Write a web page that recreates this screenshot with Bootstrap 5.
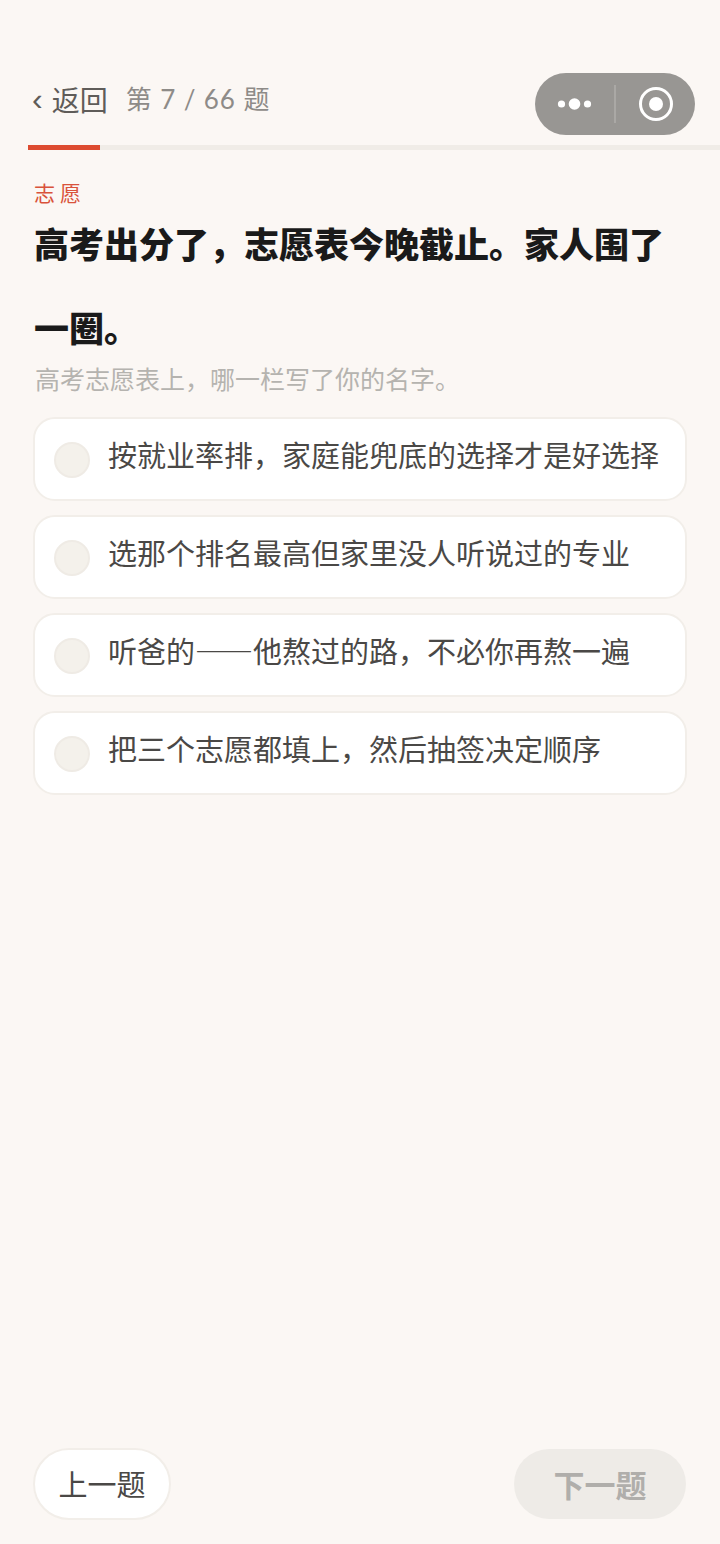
<!DOCTYPE html>
<html lang="zh-CN">
<head>
<meta charset="utf-8">
<title>志愿</title>
<link href="https://cdn.jsdelivr.net/npm/bootstrap@5.3.0/dist/css/bootstrap.min.css" rel="stylesheet">
<style>
html,body{height:100%;}
body{background:#fbf7f4;font-family:"Noto Sans CJK SC","Noto Sans",sans-serif;width:720px;height:1544px;overflow:hidden;}
.page{height:1544px;}
.topbar{height:145px;padding:73px 25px 0 32px;}
.backlink{font-size:28px;color:#5f5c59;line-height:52px;text-decoration:none;}
.backchev{font-family:"Liberation Sans",sans-serif;font-size:32px;margin-right:9px;line-height:52px;}
.counter{font-size:26px;color:#8e8b88;line-height:52px;margin-left:18px;letter-spacing:.9px;font-family:"Lato","Noto Sans CJK SC",sans-serif;}
.capsule{width:160px;height:62px;border-radius:31px;background:#989693;}
.capsule-split{width:2px;height:38px;background:#aaa8a5;}
.capsule-side{width:79px;}
.trackbar{height:5px;margin-left:28px;background:#f0ece7;}
.trackfill{width:72px;height:5px;background:#dd4b30;}
.qbody{padding:0 33px 0 34px;}
.tagline{font-size:21px;color:#d9523b;letter-spacing:5px;line-height:30px;margin-top:27px;}
.qtitle{font-size:35px;font-weight:900;color:#1a1a1a;line-height:84px;margin:0;margin-top:-6px;}
.qsub{font-size:25px;color:#b5b3af;line-height:36px;margin-top:-9px;margin-bottom:21px;margin-left:1px;}
.optbox{height:84px;background:#fff;border:2px solid #f2eee9;border-radius:22px;padding:0 0 0 19px;margin-left:-1px;margin-bottom:14px;width:654px;}
.optdot{width:36px;height:36px;border-radius:50%;background:#f4f1eb;border:2px solid #efebe5;margin-top:2px;flex:none;}
.opttext{font-size:29px;color:#4a4846;line-height:40px;margin-left:18px;white-space:nowrap;margin-top:-10px;}
.footbar{padding:0 34px 24px 33px;}
.prevbtn{width:138px;height:72px;border-radius:36px;background:#fff;border:2px solid #f2eee9;font-size:29px;color:#4a4846;padding:0;}
.nextbtn{width:172px;height:70px;border-radius:35px;background:#eeebe7;border:0;font-size:31px;font-weight:700;color:#b0aeab;padding:0;}
</style>
</head>
<body>
<div class="page d-flex flex-column">
  <div class="topbar d-flex justify-content-between align-items-start">
    <div class="d-flex align-items-center">
      <a class="backlink d-flex align-items-center" href="#"><span class="backchev">‹</span>返回</a>
      <span class="counter">第 7 / 66 题</span>
    </div>
    <div class="capsule d-flex align-items-center">
      <div class="capsule-side d-flex justify-content-center">
        <svg width="36" height="14" viewBox="0 0 36 14"><circle cx="4.5" cy="7" r="3.6" fill="#fff"/><circle cx="17.5" cy="7" r="5.8" fill="#fff"/><circle cx="30.5" cy="7" r="3.6" fill="#fff"/></svg>
      </div>
      <div class="capsule-split"></div>
      <div class="capsule-side d-flex justify-content-center">
        <svg width="36" height="36" viewBox="0 0 36 36"><circle cx="18" cy="18" r="15.5" fill="none" stroke="#fff" stroke-width="3"/><circle cx="18" cy="18" r="7" fill="#fff"/></svg>
      </div>
    </div>
  </div>
  <div class="trackbar"><div class="trackfill"></div></div>
  <div class="qbody flex-grow-1">
    <div class="tagline">志愿</div>
    <h1 class="qtitle">高考出分了，志愿表今晚截止。家人围了一圈。</h1>
    <div class="qsub">高考志愿表上，哪一栏写了你的名字。</div>
    <div class="optbox d-flex align-items-center"><span class="optdot"></span><span class="opttext">按就业率排，家庭能兜底的选择才是好选择</span></div>
    <div class="optbox d-flex align-items-center"><span class="optdot"></span><span class="opttext">选那个排名最高但家里没人听说过的专业</span></div>
    <div class="optbox d-flex align-items-center"><span class="optdot"></span><span class="opttext">听爸的——他熬过的路，不必你再熬一遍</span></div>
    <div class="optbox d-flex align-items-center"><span class="optdot"></span><span class="opttext">把三个志愿都填上，然后抽签决定顺序</span></div>
  </div>
  <div class="footbar d-flex justify-content-between align-items-center">
    <button class="btn prevbtn" type="button">上一题</button>
    <button class="btn nextbtn" type="button">下一题</button>
  </div>
</div>
<script src="https://cdn.jsdelivr.net/npm/bootstrap@5.3.0/dist/js/bootstrap.bundle.min.js"></script>
</body>
</html>
